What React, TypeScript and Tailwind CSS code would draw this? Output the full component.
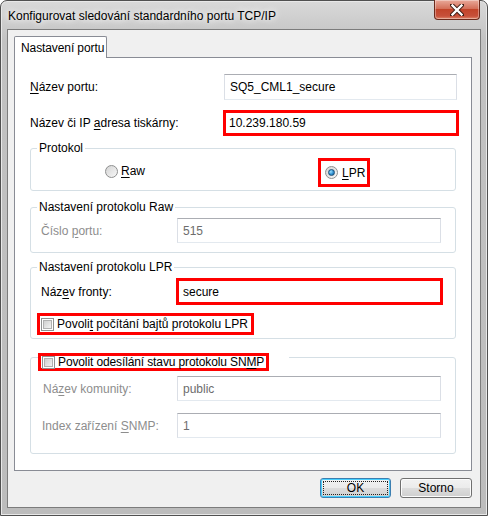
import React from "react";

const Key = ({ children }: { children: React.ReactNode }) => (
  <span className="underline decoration-1 underline-offset-[2px]">{children}</span>
);

const Radio = ({ checked }: { checked?: boolean }) => (
  <span className="flex h-[13px] w-[13px] shrink-0 items-center justify-center rounded-full border border-[#8e8f8f] bg-[linear-gradient(135deg,#d4d4d4,#f8f8f8)]">
    {checked && (
      <span className="h-[7px] w-[7px] rounded-full border border-[#1b4f78] bg-[radial-gradient(circle_at_35%_35%,#9be0ff,#2f8fd0_55%,#145a8c)]" />
    )}
  </span>
);

const Check = () => (
  <span className="flex h-[13px] w-[13px] shrink-0 items-center justify-center border border-[#8e8f8f] bg-white">
    <span className="h-[9px] w-[9px] border border-[#b0b0b0] bg-[linear-gradient(135deg,#cfcfcf,#f2f2f2)]" />
  </span>
);

const Field = ({ value, disabled, w = "w-[264px]" }: { value: string; disabled?: boolean; w?: string }) => (
  <input
    readOnly
    value={value}
    className={`h-[25px] ${w} border border-[#abadb3] border-l-[#dbdfe6] border-r-[#dbdfe6] border-b-[#e3e9ef] bg-white px-[5px] text-[12px] outline-none ${
      disabled ? "text-[#6d6d6d]" : "text-black"
    }`}
  />
);

const Group = ({ legend, children, className = "" }: { legend: React.ReactNode; children: React.ReactNode; className?: string }) => (
  <fieldset className={`w-[426px] rounded-[3px] border border-[#d5dfe5] ${className}`}>
    <legend className="ml-[6px] whitespace-nowrap px-[2px] leading-[16px] text-black">{legend}</legend>
    {children}
  </fieldset>
);

export default function App() {
  return (
    <div className="h-[516px] w-[488px] overflow-hidden bg-white font-['Liberation_Sans',Arial,sans-serif] text-[12px] leading-[16px] text-black">
      <div className="flex h-[516px] w-[488px] flex-col rounded-t-[7px] border border-[#505050] bg-[linear-gradient(to_bottom,#d9d9d9,#c2c2c2_40px,#bcbcbc)] px-[6px] pb-[7px] shadow-[inset_0_0_0_1px_#e8e8e8]">
        <div className="flex h-[28px] items-start justify-between">
          <div className="whitespace-nowrap pl-[1px] pt-[7px] text-[12px] [text-shadow:0_0_6px_#ffffff,0_0_10px_#ffffff]">
            Konfigurovat sledování standardního portu TCP/IP
          </div>
          <div className="-mt-px mr-px flex h-[20px] w-[46px] items-center justify-center rounded-b-[4px] border border-t-0 border-[#6b2a1c] bg-[linear-gradient(to_bottom,#e9a99a,#d4705a_45%,#c2442a_50%,#c7503a_85%,#e08a6e)] shadow-[inset_0_0_0_1px_rgba(255,255,255,0.35)]">
            <svg width="14" height="12" viewBox="0 0 14 12">
              <path d="M2 1 L12 11 M12 1 L2 11" stroke="#3a1a12" strokeWidth="4.2" strokeLinecap="square" />
              <path d="M2.5 1.5 L11.5 10.5 M11.5 1.5 L2.5 10.5" stroke="#ffffff" strokeWidth="2.4" strokeLinecap="square" />
            </svg>
          </div>
        </div>

        <div className="flex flex-1 flex-col border border-[#7c7c7c] bg-[#f0f0f0] pl-[6px] pr-[7px] pt-[6px]">
          <div className="flex">
            <div className="relative z-10 -mb-px flex h-[22px] w-[93px] items-center whitespace-nowrap rounded-t-[2px] border border-b-0 border-[#898c95] bg-white pl-[6px] tracking-[-0.1px]">
              Nastavení portu
            </div>
          </div>
          <div className="flex h-[414px] w-[458px] flex-col border border-[#898c95] bg-white pl-[15px]">
            <div className="mt-[16px] flex h-[26px] items-center">
              <span className="w-[194px]">
                <Key>N</Key>ázev portu:
              </span>
              <Field value="SQ5_CML1_secure" w="w-[233px] h-[26px]" />
            </div>

            <div className="mt-[10px] flex h-[26px] items-center">
              <span className="w-[193px]">
                Název či IP <Key>a</Key>dresa tiskárny:
              </span>
              <div className="flex h-[26px] w-[236px] items-center border-[3px] border-[#ff0000] bg-white pl-[3px]">
                10.239.180.59
              </div>
            </div>

            <Group legend="Protokol" className="mt-[4px] pb-[3px]">
              <div className="mt-[2px] flex h-[29px] items-center">
                <div className="flex w-[287px] items-center gap-[3px] pb-[3px] pl-[74px]">
                  <Radio />
                  <span>
                    <Key>R</Key>aw
                  </span>
                </div>
                <div className="flex h-[29px] w-[52px] items-center gap-[4px] border-[3px] border-[#ff0000] pl-[4px]">
                  <Radio checked />
                  <span>
                    <Key>L</Key>PR
                  </span>
                </div>
              </div>
            </Group>

            <Group legend="Nastavení protokolu Raw" className="mt-[8px] pb-[9px]">
              <div className="mt-[3px] flex items-center pl-[10px]">
                <span className="w-[136px] text-[#8d8d8d]">
                  Číslo <Key>p</Key>ortu:
                </span>
                <Field value="515" disabled />
              </div>
            </Group>

            <Group legend="Nastavení protokolu LPR" className="mt-[6px] pb-[3px]">
              <div className="mt-[3px] flex items-center pl-[10px]">
                <span className="w-[135px]">
                  Náz<Key>e</Key>v fronty:
                </span>
                <div className="flex h-[27px] w-[267px] items-center border-[3px] border-[#ff0000] bg-white pl-[4px]">
                  secure
                </div>
              </div>
              <div className="ml-[6px] mt-[8px] flex h-[22px] w-[217px] items-center gap-[3px] whitespace-nowrap border-[3px] border-[#ff0000] pl-[1px]">
                <Check />
                <span>
                  Povoli<Key>t</Key> počítání bajtů protokolu LPR
                </span>
              </div>
            </Group>

            <fieldset className="mt-[14px] w-[426px] rounded-[3px] border border-[#d5dfe5] pb-[15px]">
              <legend className="ml-[7px] pr-[20px]">
                <div className="-mb-[10px] flex h-[18px] w-[231px] items-center gap-[3px] whitespace-nowrap border-[3px] border-[#ff0000] bg-white pl-[1px]">
                  <Check />
                  <span className="tracking-[-0.12px]">
                    Povolit odesílání stavu protokolu SN<Key>M</Key>P
                  </span>
                </div>
              </legend>
              <div className="mt-[15px] flex items-center pl-[12px]">
                <span className="w-[134px] text-[#8d8d8d]">
                  Ná<Key>z</Key>ev komunity:
                </span>
                <Field value="public" disabled />
              </div>
              <div className="mt-[12px] flex items-center pl-[11px]">
                <span className="w-[135px] text-[#8d8d8d]">
                  Index zařízení <Key>S</Key>NMP:
                </span>
                <Field value="1" disabled />
              </div>
            </fieldset>
          </div>

          <div className="mt-[7px] flex justify-end gap-[9px] pr-px">
            <button className="flex h-[20px] w-[71px] items-center justify-center rounded-[3px] border border-[#3c7fb1] bg-[linear-gradient(to_bottom,#f2f2f2,#ebebeb_50%,#dddddd_50%,#cfcfcf)] p-[2px] shadow-[inset_0_0_0_1px_#48d0ff]">
              <span className="flex h-full w-full items-center justify-center border border-dotted border-[#222]">OK</span>
            </button>
            <button className="flex h-[20px] w-[72px] items-center justify-center rounded-[3px] border border-[#707070] bg-[linear-gradient(to_bottom,#f2f2f2,#ebebeb_50%,#dddddd_50%,#cfcfcf)] shadow-[inset_0_0_0_1px_#fcfcfc]">
              Storno
            </button>
          </div>
        </div>
      </div>
    </div>
  );
}
